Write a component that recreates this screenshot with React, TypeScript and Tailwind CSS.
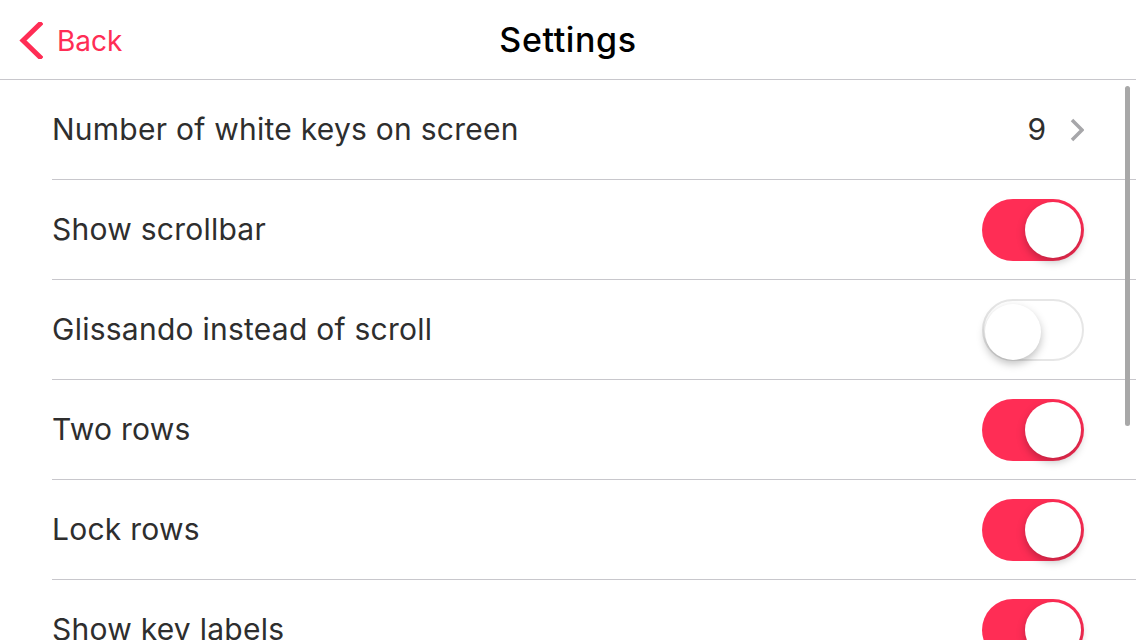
import { useState } from 'react';

type Row = { label: string; value?: string; on?: boolean };

const rows: Row[] = [
  { label: 'Number of white keys on screen', value: '9' },
  { label: 'Show scrollbar', on: true },
  { label: 'Glissando instead of scroll', on: false },
  { label: 'Two rows', on: true },
  { label: 'Lock rows', on: true },
  { label: 'Show key labels', on: true },
];

function Toggle({ on, onClick }: { on: boolean; onClick: () => void }) {
  return (
    <button
      onClick={onClick}
      className={`relative h-[62px] w-[102px] rounded-full transition-colors ${
        on ? 'bg-[#ff2d55]' : 'border-2 border-[#e6e6e6] bg-white'
      }`}
    >
      <span
        className={`absolute top-[3px] h-[56px] w-[56px] rounded-full bg-white shadow-[0_4px_8px_rgba(0,0,0,0.25)] ${
          on ? 'right-[3px]' : 'left-[1px] top-[1px]'
        }`}
      />
    </button>
  );
}

export default function App() {
  const [state, setState] = useState(rows.map((r) => !!r.on));

  return (
    <div className="relative h-[640px] w-[1136px] overflow-hidden bg-white font-['Inter','Liberation_Sans',sans-serif]">
      {/* Header */}
      <header className="relative flex h-[80px] items-center justify-center border-b border-[#c8c7cc]">
        <button className="absolute left-[18px] top-[22px] flex items-center gap-[14px] text-[#ff2d55]">
          <svg width="25" height="37" viewBox="0 0 25 37" fill="none">
            <path d="M22 2 L5 18.5 L22 35" stroke="#ff2d55" strokeWidth="5" strokeLinecap="square" />
          </svg>
          <span className="text-[28px] leading-none">Back</span>
        </button>
        <h1 className="text-[34px] font-medium leading-none tracking-[0.6px] text-black">Settings</h1>
      </header>

      {/* List */}
      <div className="flex flex-col">
        {rows.map((r, i) => (
          <div key={r.label} className="flex h-[100px] items-center pl-[52px]">
            <div className="flex h-full flex-1 items-center justify-between border-b border-[#c8c7cc] pr-[52px]">
              <span className="text-[30px] tracking-[0.25px] text-[#2e2e2e]">{r.label}</span>
              {r.value !== undefined ? (
                <div className="flex items-center gap-[24px]">
                  <span className="text-[30px] text-[#2e2e2e]">{r.value}</span>
                  <svg width="14" height="24" viewBox="0 0 14 24" fill="none">
                    <path d="M2 2 L12 12 L2 22" stroke="#a7a7aa" strokeWidth="3.5" />
                  </svg>
                </div>
              ) : (
                <Toggle
                  on={state[i]}
                  onClick={() => setState((s) => s.map((v, j) => (j === i ? !v : v)))}
                />
              )}
            </div>
          </div>
        ))}
      </div>

      {/* Scroll indicator */}
      <div className="absolute right-[6px] top-[86px] h-[340px] w-[5px] rounded-full bg-[#a8a8a8]" />
    </div>
  );
}
